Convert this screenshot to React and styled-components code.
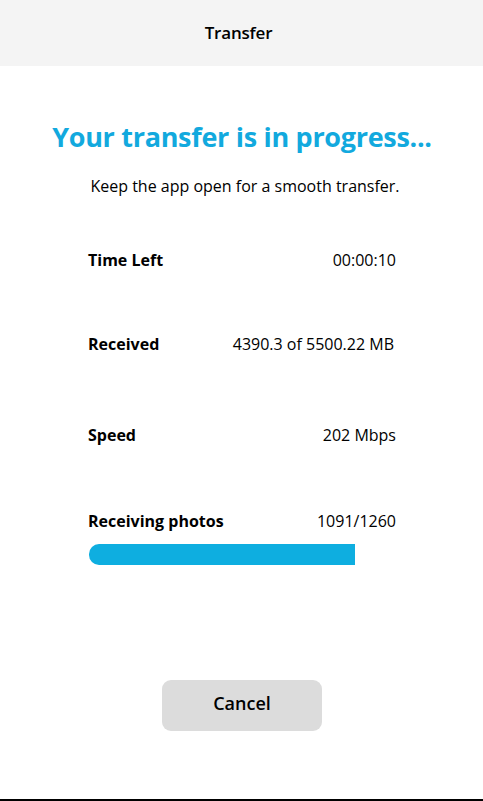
import React from "react";
import styled, { createGlobalStyle } from "styled-components";

const Global = createGlobalStyle`
  html, body { margin: 0; padding: 0; background: #fff; }
  body { font-family: "Open Sans", "Noto Sans", sans-serif; color: #000; }
  * { box-sizing: border-box; }
`;

const Page = styled.div`
  width: 483px;
  height: 801px;
  display: flex;
  flex-direction: column;
  border-bottom: 2px solid #000;
  background: #fff;
`;

const Header = styled.header`
  height: 66px;
  flex: none;
  background: #f4f4f4;
  display: flex;
  align-items: center;
  justify-content: center;
  padding-right: 6px;
  padding-bottom: 1px;
  font-size: 17px;
  font-weight: 600;
  letter-spacing: -0.2px;
`;

const Main = styled.main`
  flex: 1;
  display: flex;
  flex-direction: column;
  padding: 52px 87px 0 88px;
`;

const Title = styled.h1`
  margin: 0 -40px;
  text-align: center;
  font-size: 27px;
  line-height: 38px;
  font-weight: 700;
  color: #12a9de;
  letter-spacing: -0.3px;
`;

const Subtitle = styled.p`
  margin: 19px -20px 0;
  padding-left: 6px;
  text-align: center;
  font-size: 16px;
  line-height: 22px;
`;

const Row = styled.div`
  margin-top: ${(p) => p.$gap}px;
  display: flex;
  justify-content: space-between;
  align-items: center;
  height: 22px;
  font-size: 16px;
  line-height: 22px;
`;

const Label = styled.span`
  font-weight: 700;
`;

const Value = styled.span`
  font-weight: 400;
  padding-right: ${(p) => p.$inset || 0}px;
`;

const Track = styled.div`
  margin-top: 12px;
  height: 21px;
  margin-left: 1px;
`;

const Fill = styled.div`
  height: 100%;
  background: #0eaee0;
  border-radius: 10px 0 0 10px;
`;

const Footer = styled.div`
  display: flex;
  justify-content: center;
  margin-top: 115px;
`;

const CancelButton = styled.button`
  width: 160px;
  height: 51px;
  padding: 0 0 5px;
  border: none;
  border-radius: 9px;
  background: #dcdcdc;
  font-family: inherit;
  font-size: 18px;
  font-weight: 600;
  color: #000;
  cursor: pointer;
`;

const stats = [
  { label: "Time Left", value: "00:00:10", gap: 52 },
  { label: "Received", value: "4390.3 of 5500.22 MB", gap: 62, inset: 2 },
  { label: "Speed", value: "202 Mbps", gap: 69 },
];

export default function App() {
  const done = 1091;
  const total = 1260;
  return (
    <>
      <Global />
      <Page>
        <Header>Transfer</Header>
        <Main>
          <Title>Your transfer is in progress...</Title>
          <Subtitle>Keep the app open for a smooth transfer.</Subtitle>
          {stats.map((s) => (
            <Row key={s.label} $gap={s.gap}>
              <Label>{s.label}</Label>
              <Value $inset={s.inset}>{s.value}</Value>
            </Row>
          ))}
          <Row $gap={64}>
            <Label>Receiving photos</Label>
            <Value>
              {done}/{total}
            </Value>
          </Row>
          <Track>
            <Fill style={{ width: `${(done / total) * 100}%` }} />
          </Track>
          <Footer>
            <CancelButton>Cancel</CancelButton>
          </Footer>
        </Main>
      </Page>
    </>
  );
}
